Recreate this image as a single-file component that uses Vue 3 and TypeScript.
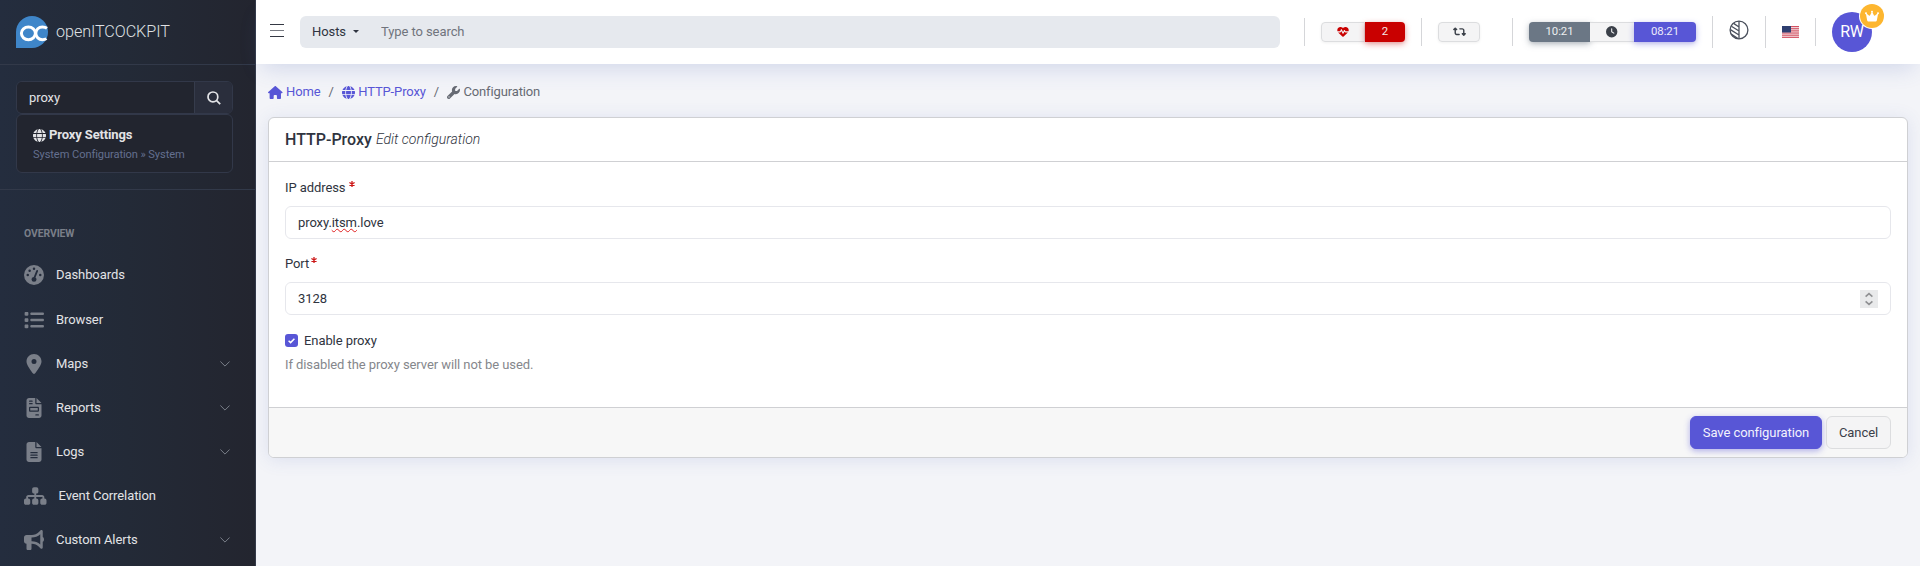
<script setup lang="ts">
import { ref } from 'vue'

interface Glyph {
  w: number
  d: string
}

interface NavItem {
  label: string
  icon: string
  size: number
  expandable: boolean
}

const glyphs: Record<string, Glyph> = {
  globe: { w: 512, d: 'M352 256c0 22.2-1.2 43.6-3.3 64H163.3c-2.2-20.4-3.3-41.8-3.3-64s1.2-43.6 3.3-64H348.7c2.2 20.4 3.3 41.8 3.3 64zm28.8-64H503.9c5.3 20.5 8.1 41.9 8.1 64s-2.8 43.5-8.1 64H380.8c2.1-20.6 3.2-42 3.2-64s-1.1-43.4-3.2-64zm112.6-32H376.7c-10-63.9-29.8-117.4-55.3-151.6c78.3 20.7 142 77.5 171.9 151.6zm-149.1 0H167.7c6.1-36.4 15.5-68.6 27-94.7c10.5-23.6 22.2-40.7 33.5-51.5C239.4 3.2 248.7 0 256 0s16.6 3.2 27.8 13.8c11.3 10.8 23 27.9 33.5 51.5c11.6 26 20.9 58.2 27 94.7zm-209 0H18.6C48.6 85.9 112.2 29.1 190.6 8.4C165.1 42.6 145.3 96.1 135.3 160zM8.1 192H131.2c-2.1 20.6-3.2 42-3.2 64s1.1 43.4 3.2 64H8.1C2.8 299.5 0 278.1 0 256s2.8-43.5 8.1-64zM194.7 446.6c-11.6-26-20.9-58.2-27-94.6H344.3c-6.1 36.4-15.5 68.6-27 94.6c-10.5 23.6-22.2 40.7-33.5 51.5C272.6 508.8 263.3 512 256 512s-16.6-3.2-27.8-13.8c-11.3-10.8-23-27.9-33.5-51.5zM135.3 352c10 63.9 29.8 117.4 55.3 151.6C112.2 482.9 48.6 426.1 18.6 352H135.3zm358.1 0c-30 74.1-93.6 130.9-171.9 151.6c25.5-34.2 45.2-87.7 55.3-151.6H493.4z' },
  house: { w: 576, d: 'M575.8 255.5c0 18-15 32.1-32 32.1h-32l.7 160.2c0 2.7-.2 5.4-.5 8.1V472c0 22.1-17.9 40-40 40H456c-1.1 0-2.2 0-3.3-.1c-1.4 .1-2.8 .1-4.2 .1H416 392c-22.1 0-40-17.9-40-40V448 384c0-17.7-14.3-32-32-32H256c-17.7 0-32 14.3-32 32v64 24c0 22.1-17.9 40-40 40H160 128.1c-1.5 0-3-.1-4.5-.2c-1.2 .1-2.4 .2-3.6 .2H104c-22.1 0-40-17.9-40-40V360c0-.9 0-1.9 .1-2.8V287.6H32c-18 0-32-14-32-32.1c0-9 3-17 10-24L266.4 8c7-7 15-8 22-8s15 2 21 7L564.8 231.5c8 7 12 15 11 24z' },
  wrench: { w: 512, d: 'M352 320c88.4 0 160-71.6 160-160c0-15.3-2.2-30.1-6.2-44.2c-3.1-10.8-16.4-13.2-24.3-5.3l-76.8 76.8c-3 3-7.1 4.7-11.3 4.7H336c-8.8 0-16-7.2-16-16V118.6c0-4.2 1.7-8.3 4.7-11.3l76.8-76.8c7.9-7.9 5.4-21.2-5.3-24.3C382.1 2.2 367.3 0 352 0C263.6 0 192 71.6 192 160c0 19.1 3.4 37.5 9.5 54.5L19.9 396.1C7.2 408.8 0 426.1 0 444.1C0 481.6 30.4 512 67.9 512c18 0 35.3-7.2 48-19.9L297.5 310.5c17 6.2 35.4 9.5 54.5 9.5zM80 408a24 24 0 1 1 0 48 24 24 0 1 1 0-48z' },
  gauge: { w: 512, d: 'M256 0a256 256 0 1 0 0 512A256 256 0 1 0 256 0zM256 64a32 32 0 1 1 0 64a32 32 0 1 1 0-64zM144 112a32 32 0 1 1 0 64a32 32 0 1 1 0-64zM96 224a32 32 0 1 1 0 64a32 32 0 1 1 0-64zM416 224a32 32 0 1 1 0 64a32 32 0 1 1 0-64zM346 130c12 5 18 19 13 31L294 319c16 12 26 29 26 49a64 64 0 1 1-70-64L315 143c5-12 19-18 31-13z' },
  list: { w: 512, d: 'M40 48C26.7 48 16 58.7 16 72v48c0 13.3 10.7 24 24 24H88c13.3 0 24-10.7 24-24V72c0-13.3-10.7-24-24-24H40zM192 64c-17.7 0-32 14.3-32 32s14.3 32 32 32H480c17.7 0 32-14.3 32-32s-14.3-32-32-32H192zm0 160c-17.7 0-32 14.3-32 32s14.3 32 32 32H480c17.7 0 32-14.3 32-32s-14.3-32-32-32H192zm0 160c-17.7 0-32 14.3-32 32s14.3 32 32 32H480c17.7 0 32-14.3 32-32s-14.3-32-32-32H192zM16 232v48c0 13.3 10.7 24 24 24H88c13.3 0 24-10.7 24-24V232c0-13.3-10.7-24-24-24H40c-13.3 0-24 10.7-24 24zM40 368c-13.3 0-24 10.7-24 24v48c0 13.3 10.7 24 24 24H88c13.3 0 24-10.7 24-24V392c0-13.3-10.7-24-24-24H40z' },
  pin: { w: 384, d: 'M215.7 499.2C267 435 384 279.4 384 192C384 86 298 0 192 0S0 86 0 192c0 87.4 117 243 168.3 307.2c12.3 15.3 35.1 15.3 47.4 0zM192 128a64 64 0 1 1 0 128 64 64 0 1 1 0-128z' },
  invoice: { w: 384, d: 'M64 0C28.7 0 0 28.7 0 64V448c0 35.3 28.7 64 64 64H320c35.3 0 64-28.7 64-64V160H256c-17.7 0-32-14.3-32-32V0H64zM256 0V128H384L256 0zM80 64h64c8.8 0 16 7.2 16 16s-7.2 16-16 16H80c-8.8 0-16-7.2-16-16s7.2-16 16-16zm0 64h64c8.8 0 16 7.2 16 16s-7.2 16-16 16H80c-8.8 0-16-7.2-16-16s7.2-16 16-16zm16 96H288c17.7 0 32 14.3 32 32v64c0 17.7-14.3 32-32 32H96c-17.7 0-32-14.3-32-32V256c0-17.7 14.3-32 32-32zm0 32v64H288V256H96zM240 416h64c8.8 0 16 7.2 16 16s-7.2 16-16 16H240c-8.8 0-16-7.2-16-16s7.2-16 16-16z' },
  file: { w: 384, d: 'M64 0C28.7 0 0 28.7 0 64V448c0 35.3 28.7 64 64 64H320c35.3 0 64-28.7 64-64V160H256c-17.7 0-32-14.3-32-32V0H64zM256 0V128H384L256 0zM112 256H272c8.8 0 16 7.2 16 16s-7.2 16-16 16H112c-8.8 0-16-7.2-16-16s7.2-16 16-16zm0 64H272c8.8 0 16 7.2 16 16s-7.2 16-16 16H112c-8.8 0-16-7.2-16-16s7.2-16 16-16zm0 64H272c8.8 0 16 7.2 16 16s-7.2 16-16 16H112c-8.8 0-16-7.2-16-16s7.2-16 16-16z' },
  sitemap: { w: 576, d: 'M208 80c0-26.5 21.5-48 48-48h64c26.5 0 48 21.5 48 48v64c0 26.5-21.5 48-48 48h-8v40H464c30.9 0 56 25.1 56 56v32h8c26.5 0 48 21.5 48 48v64c0 26.5-21.5 48-48 48H464c-26.5 0-48-21.5-48-48V368c0-26.5 21.5-48 48-48h8V288c0-4.4-3.6-8-8-8H312v40h8c26.5 0 48 21.5 48 48v64c0 26.5-21.5 48-48 48H256c-26.5 0-48-21.5-48-48V368c0-26.5 21.5-48 48-48h8V280H112c-4.4 0-8 3.6-8 8v32h8c26.5 0 48 21.5 48 48v64c0 26.5-21.5 48-48 48H48c-26.5 0-48-21.5-48-48V368c0-26.5 21.5-48 48-48h8V288c0-30.9 25.1-56 56-56H264V192h-8c-26.5 0-48-21.5-48-48V80z' },
  bullhorn: { w: 512, d: 'M480 32c0-12.9-7.8-24.6-19.8-29.6s-25.7-2.2-34.9 6.9L381.7 53c-48 48-113.1 75-181 75H192 160 64c-35.3 0-64 28.7-64 64v96c0 35.3 28.7 64 64 64l0 128c0 17.7 14.3 32 32 32h64c17.7 0 32-14.3 32-32V352l8.7 0c67.9 0 133 27 181 75l43.6 43.6c9.2 9.2 22.9 11.9 34.9 6.9s19.8-16.6 19.8-29.6V300.4c18.6-8.8 32-32.5 32-60.4s-13.4-51.6-32-60.4V32zm-64 76.7V240 371.3C357.2 317.8 280.5 288 200.7 288H192V192h8.7c79.8 0 156.5-29.8 215.3-83.3z' },
  crown: { w: 576, d: 'M309 106c11.4-7 19-19.7 19-34c0-22.1-17.9-40-40-40s-40 17.9-40 40c0 14.4 7.6 27 19 34L209.7 220.6c-9.1 18.2-32.7 23.4-48.6 10.7L72 160c5-6.7 8-15 8-24c0-22.1-17.9-40-40-40S0 113.9 0 136s17.9 40 40 40c.2 0 .5 0 .7 0L86.4 427.4c5.5 30.4 32 52.6 63 52.6H426.6c30.9 0 57.4-22.1 63-52.6L535.3 176c.2 0 .5 0 .7 0c22.1 0 40-17.9 40-40s-17.9-40-40-40s-40 17.9-40 40c0 9 3 17.3 8 24l-89.1 71.3c-15.9 12.7-39.5 7.5-48.6-10.7L309 106z' },
  clock: { w: 512, d: 'M256 0a256 256 0 1 1 0 512A256 256 0 1 1 256 0zM232 120V256c0 8 4 15.5 10.7 20l96 64c11 7.4 25.9 4.4 33.3-6.7s4.4-25.9-6.7-33.3L280 243.2V120c0-13.3-10.7-24-24-24s-24 10.7-24 24z' },
  retweet: { w: 576, d: 'M272 416c17.7 0 32-14.3 32-32s-14.3-32-32-32H160c-17.7 0-32-14.3-32-32V192h32c12.9 0 24.6-7.8 29.6-19.8s2.2-25.7-6.9-34.9l-64-64c-12.5-12.5-32.8-12.5-45.3 0l-64 64c-9.2 9.2-11.9 22.9-6.9 34.9s16.6 19.8 29.6 19.8l32 0 0 128c0 53 43 96 96 96H272zM304 96c-17.7 0-32 14.3-32 32s14.3 32 32 32l112 0c17.7 0 32 14.3 32 32l0 128H416c-12.9 0-24.6 7.8-29.6 19.8s-2.2 25.7 6.9 34.9l64 64c12.5 12.5 32.8 12.5 45.3 0l64-64c9.2-9.2 11.9-22.9 6.9-34.9s-16.6-19.8-29.6-19.8l-32 0V192c0-53-43-96-96-96L304 96z' },
  heart: { w: 512, d: 'M228.3 469.1L47.6 300.4c-4.2-3.9-8.2-8.1-11.9-12.4h87c22.6 0 43-13.6 51.7-34.5l10.5-25.2 49.3 109.5c3.8 8.5 12.1 14 21.4 14.1s17.8-5 22-13.3L320 253.7l1.7 3.4c9.5 19 28.9 31 50.1 31H476.3c-3.7 4.3-7.7 8.5-11.9 12.4L283.7 469.1c-7.5 7-17.4 10.9-27.7 10.9s-20.2-3.9-27.7-10.9zM503.7 240h-132c-3 0-5.8-1.7-7.2-4.4l-23.2-46.3c-4.1-8.1-12.4-13.3-21.5-13.3s-17.4 5.1-21.5 13.3l-41.4 82.8L205.9 158.2c-3.9-8.7-12.7-14.3-22.2-14.1s-18.1 5.9-21.8 14.8l-31.8 76.3c-1.2 3-4.2 4.9-7.4 4.9H16c-2.6 0-5 .4-7.3 1.1C3 225.2 0 208.2 0 190.9v-5.8c0-69.9 50.5-129.5 119.4-141C165 36.5 211.4 51.4 244 84l12 12 12-12c32.6-32.6 79-47.5 124.6-39.9C461.5 55.6 512 115.2 512 185.1v5.8c0 16.9-2.8 33.5-8.3 49.1z' },
}

const box = (name: string): string => `0 0 ${glyphs[name].w} 512`

const nav: NavItem[] = [
  { label: 'Dashboards', icon: 'gauge', size: 20, expandable: false },
  { label: 'Browser', icon: 'list', size: 20, expandable: false },
  { label: 'Maps', icon: 'pin', size: 20, expandable: true },
  { label: 'Reports', icon: 'invoice', size: 20, expandable: true },
  { label: 'Logs', icon: 'file', size: 20, expandable: true },
  { label: 'Event Correlation', icon: 'sitemap', size: 22.5, expandable: false },
  { label: 'Custom Alerts', icon: 'bullhorn', size: 20, expandable: true },
]

const menuQuery = ref('proxy')
const objectQuery = ref('')
const port = ref('3128')
const enabled = ref(true)
</script>

<template>
  <div class="layout">
    <aside class="sidebar">
      <div class="brand">
        <svg class="logo" viewBox="0 0 32 32">
          <path d="M0 32V16A16 16 0 1 1 16 32Z" fill="#3f86c9" />
          <g fill="none" stroke="#fff">
            <ellipse cx="12.4" cy="17.3" rx="7" ry="6.4" stroke-width="3" />
            <path d="M31 12.2C29.6 11.2 28 10.9 26.4 10.9A6.6 6.4 0 1 0 26.4 23.7C28 23.7 29.3 23.4 30.4 22.6" stroke-width="3" />
            <path d="M18.2 14.8h3.4M20 14.8v5.4" stroke-width="1" />
          </g>
        </svg>
        <span class="brand-name">openITCOCKPIT</span>
      </div>

      <div class="menu-search">
        <div class="search-group">
          <input v-model="menuQuery" class="search-input" type="text" spellcheck="false" />
          <button class="search-button" type="button">
            <svg class="lens" viewBox="0 0 14 14" width="14" height="14">
              <circle cx="5.9" cy="5.9" r="4.9" />
              <path d="M9.4 9.4L13.2 13.2" />
            </svg>
          </button>
        </div>
        <div class="search-result">
          <div class="result-title">
            <svg class="fa13" :viewBox="box('globe')"><path :d="glyphs.globe.d" /></svg>
            <span>Proxy Settings</span>
          </div>
          <div class="result-path">System Configuration » System</div>
        </div>
      </div>

      <div class="nav-title">Overview</div>
      <nav class="nav">
        <a v-for="item in nav" :key="item.label" class="nav-item">
          <svg class="nav-icon" :width="item.size" height="20" :viewBox="box(item.icon)">
            <path :d="glyphs[item.icon].d" fill-rule="evenodd" />
          </svg>
          <span class="nav-label">{{ item.label }}</span>
          <svg v-if="item.expandable" class="chevron" viewBox="0 0 10 6" width="10" height="6">
            <path d="M0.4 0.5L5 5.1L9.6 0.5" />
          </svg>
        </a>
      </nav>
    </aside>

    <div class="page">
      <header class="header">
        <div class="toggler"><i></i><i class="mid"></i><i></i></div>
        <div class="object-search">
          <span class="object-type">Hosts<i class="caret"></i></span>
          <input v-model="objectQuery" class="object-input" type="text" placeholder="Type to search" />
        </div>

        <i class="rule r1"></i>
        <div class="btn-group health">
          <span class="seg light heart">
            <svg width="12" height="11.4" :viewBox="box('heart')"><path :d="glyphs.heart.d" /></svg>
          </span>
          <span class="seg danger">2</span>
        </div>
        <i class="rule"></i>
        <div class="btn-group swap">
          <span class="seg light">
            <svg width="13" height="11.4" :viewBox="box('retweet')"><path :d="glyphs.retweet.d" /></svg>
          </span>
        </div>
        <i class="rule"></i>
        <div class="btn-group times">
          <span class="seg secondary">10:21</span>
          <span class="seg light">
            <svg width="11.4" height="11.4" :viewBox="box('clock')"><path :d="glyphs.clock.d" fill-rule="evenodd" /></svg>
          </span>
          <span class="seg primary">08:21</span>
        </div>
        <i class="rule tall"></i>
        <svg class="contrast" viewBox="0 0 20 20" width="20" height="20">
          <circle cx="10" cy="10" r="8.9" />
          <path d="M10 1v18M4.6 3.4L10 7M2.4 6.2L10 11M1.4 9.6L10 15M2.2 14L8.6 18.4" />
        </svg>
        <i class="rule tall"></i>
        <svg class="flag" viewBox="0 0 17 12" width="17" height="12">
          <rect width="17" height="12" fill="#f6e9eb" />
          <path d="M0 .5h17M0 2.35h17M0 4.2h17M0 6.05h17M0 7.9h17M0 9.75h17M0 11.6h17" stroke="#d0485a" stroke-width=".95" />
          <rect width="9" height="6.5" fill="#2e3f70" />
        </svg>
        <i class="rule"></i>
        <div class="avatar">
          <span>RW</span>
          <div class="badge">
            <svg width="14" height="12.4" :viewBox="box('crown')"><path :d="glyphs.crown.d" /></svg>
          </div>
        </div>
      </header>

      <main class="content">
        <ol class="breadcrumb">
          <li class="link">
            <svg class="house" :viewBox="box('house')"><path :d="glyphs.house.d" /></svg>Home
          </li>
          <li class="slash">/</li>
          <li class="link">
            <svg class="fa13" :viewBox="box('globe')"><path :d="glyphs.globe.d" /></svg>HTTP-Proxy
          </li>
          <li class="slash">/</li>
          <li>
            <svg class="fa13" :viewBox="box('wrench')"><path :d="glyphs.wrench.d" /></svg>Configuration
          </li>
        </ol>

        <section class="card">
          <div class="card-header">
            <h5>HTTP-Proxy</h5>
            <em>Edit configuration</em>
          </div>
          <div class="card-body">
            <div class="label">IP address
              <svg class="star" viewBox="0 0 6 6"><path d="M3 0v6M.4 1.5l5.2 3M5.6 1.5l-5.2 3" /></svg>
            </div>
            <div class="field"><span>proxy.<span class="typo">itsm</span>.love</span></div>
            <div class="label second">Port
              <svg class="star tight" viewBox="0 0 6 6"><path d="M3 0v6M.4 1.5l5.2 3M5.6 1.5l-5.2 3" /></svg>
            </div>
            <div class="field">
              <input v-model="port" class="port" type="text" />
              <span class="spinner">
                <svg viewBox="0 0 18 18" width="18" height="18"><path d="M5.6 6.7L9 3.6L12.4 6.7M5.6 11.3L9 14.4L12.4 11.3" /></svg>
              </span>
            </div>
            <label class="check">
              <input v-model="enabled" class="native" type="checkbox" />
              <span class="tick">
                <svg v-if="enabled" viewBox="0 0 13 13" width="13" height="13"><path d="M3.6 6.7L5.6 8.6L9.4 4.8" /></svg>
              </span>
              Enable proxy
            </label>
            <div class="hint">If disabled the proxy server will not be used.</div>
          </div>
          <div class="card-footer">
            <button class="btn save" type="button">Save configuration</button>
            <button class="btn cancel" type="button">Cancel</button>
          </div>
        </section>
      </main>
    </div>
  </div>
</template>

<style>
body {
  background: #f3f4f8;
  overflow: hidden;
}
</style>

<style scoped>
* {
  box-sizing: border-box;
}

.layout {
  display: flex;
  height: 566px;
  overflow: hidden;
  font: 400 13px/19.5px Roboto, "Liberation Sans", sans-serif;
  letter-spacing: -0.08px;
  color: #2f3440;
}

svg {
  display: block;
  flex: none;
  fill: currentColor;
}

input,
button {
  font: inherit;
  letter-spacing: inherit;
  color: inherit;
  margin: 0;
  outline: none;
}

.fa13 {
  width: 13px;
  height: 13px;
}

/* Sidebar */
.sidebar {
  flex: none;
  width: 256px;
  border-right: 1px solid #343a49;
  background: linear-gradient(90deg, #242d3e 0, #232a37 50%, #23252f 100%);
  color: #e2e3e6;
}

.brand {
  display: flex;
  align-items: center;
  gap: 8px;
  height: 65px;
  padding: 0 16px 1px;
  border-bottom: 1px solid #323949;
}

.logo {
  width: 32px;
  height: 32px;
}

.brand-name {
  font-size: 16.2px;
  font-weight: 300;
  color: #dfe0e3;
}

.menu-search {
  height: 125px;
  padding: 16px 22px 0 16px;
  border-bottom: 1px solid #323949;
}

.search-group {
  display: flex;
  height: 33px;
  border: 1px solid #323849;
  border-radius: 6px;
  overflow: hidden;
}

.search-input {
  flex: 1;
  min-width: 0;
  padding: 0 12px;
  border: 0;
  background: #22252f;
}

.search-button {
  display: flex;
  align-items: center;
  justify-content: center;
  width: 38px;
  padding: 0;
  border: 0;
  border-left: 1px solid #363c4c;
  background: #2a2e3c;
}

.lens {
  fill: none;
  stroke: #e3e4e7;
  stroke-width: 1.7;
}

.search-result {
  height: 59px;
  padding: 10px 16px 0;
  border: 1px solid #323849;
  border-radius: 6px;
  background: #22252f;
}

.result-title {
  display: flex;
  align-items: center;
  gap: 3px;
  height: 20px;
  font-weight: 700;
  letter-spacing: -0.13px;
}

.result-path {
  font-size: 11.1px;
  line-height: 19px;
  color: #64708f;
}

.nav-title {
  padding: 34px 24px 0;
  font-size: 10.4px;
  line-height: 19px;
  font-weight: 700;
  text-transform: uppercase;
  color: #7a7f89;
}

.nav {
  display: flex;
  flex-direction: column;
  padding-top: 10px;
}

.nav-item {
  display: flex;
  align-items: center;
  height: 44px;
  padding: 0 25px 0 24px;
}

.nav-item:first-child {
  height: 45px;
  padding-bottom: 1px;
}

.nav-icon {
  margin-right: 12px;
  color: #7a7f89;
}

.nav-label {
  flex: 1;
  padding-bottom: 1px;
}

.chevron path {
  fill: none;
  stroke: #7a7f89;
  stroke-width: 1;
}

/* Header */
.page {
  flex: 1;
  min-width: 0;
}

.header {
  display: flex;
  align-items: center;
  height: 64px;
  padding-left: 14px;
  background: #fff;
  box-shadow: 0 10px 22px -6px rgba(70, 95, 180, 0.2);
}

.toggler {
  display: flex;
  flex-direction: column;
  gap: 5px;
  width: 14px;
  margin: 0 16px 3px 0;
}

.toggler i {
  height: 1px;
  background: #343843;
}

.toggler .mid {
  background: #777a82;
}

.object-search {
  display: flex;
  align-items: center;
  width: 980px;
  height: 32px;
  border-radius: 6px;
  background: #e6e9ee;
}

.object-type {
  display: flex;
  align-items: center;
  gap: 7px;
  width: 69px;
  padding-left: 12px;
}

.caret {
  margin-bottom: 1px;
  border: 3px solid transparent;
  border-top-color: #2f3440;
  border-bottom: 0;
}

.object-input {
  flex: 1;
  padding: 0 12px;
  border: 0;
  background: transparent;
}

.object-input::placeholder {
  color: #70747d;
  opacity: 1;
}

.rule {
  width: 1px;
  height: 28px;
  background: #d5d6d9;
}

.rule.tall {
  height: 32px;
}

.r1 {
  margin-left: 24px;
}

.btn-group {
  display: flex;
  height: 20px;
  border-radius: 4px;
  font-size: 11.375px;
  box-shadow: 0 1px 3px rgba(0, 0, 0, 0.06);
}

.health {
  margin: 0 16px;
}

.swap {
  margin: 0 32px 0 16px;
}

.times {
  margin: 0 16px;
}

.seg {
  display: flex;
  align-items: center;
  justify-content: center;
}

.seg:first-child {
  border-radius: 4px 0 0 4px;
}

.seg:last-child {
  border-radius: 0 4px 4px 0;
}

.seg:only-child {
  border-radius: 4px;
}

.light {
  border: 1px solid #dcdddf;
  background: #f4f4f5;
  color: #3b4049;
}

.health .seg {
  width: 44px;
}

.health .danger {
  width: 40px;
  background: #c90000;
  color: #f3e6e6;
  box-shadow: 0 2px 6px rgba(201, 0, 0, 0.4);
}

.heart {
  color: #c90000;
}

.swap .seg {
  width: 42px;
}

.times .secondary {
  width: 61px;
  background: #6b7785;
  color: #eceef0;
  box-shadow: 0 2px 6px rgba(107, 119, 133, 0.5);
}

.times .light {
  width: 44px;
  border-left: 0;
  border-right: 0;
}

.times .primary {
  width: 62px;
  background: #5856d6;
  color: #ecebfa;
  box-shadow: 0 2px 6px rgba(88, 86, 214, 0.4);
}

.contrast {
  margin: 0 16px 4px;
  fill: none;
  stroke: #4a505c;
  stroke-width: 1.3;
}

.flag {
  margin: 0 16px;
}

.avatar {
  position: relative;
  display: flex;
  align-items: center;
  justify-content: center;
  width: 40px;
  height: 40px;
  margin-left: 16px;
  border-radius: 50%;
  background: #5856d6;
  color: #fff;
  font-size: 16px;
  letter-spacing: -0.4px;
}

.badge {
  position: absolute;
  top: -8px;
  right: -12px;
  display: flex;
  align-items: center;
  justify-content: center;
  width: 24px;
  height: 24px;
  border-radius: 50%;
  background: #fdb62f;
  box-shadow: 0 0 0 1px #fff;
}

/* Content */
.content {
  padding: 0 12px;
}

.breadcrumb {
  display: flex;
  align-items: center;
  height: 53px;
  margin: 0;
  padding: 3px 0 0;
  list-style: none;
  letter-spacing: -0.14px;
  color: #666a73;
}

.breadcrumb li {
  display: flex;
  align-items: center;
  gap: 3.5px;
}

.breadcrumb .link {
  color: #5856d6;
}

.breadcrumb .slash {
  padding: 0 8px;
}

.house {
  width: 14.6px;
  height: 13px;
}

.card {
  border: 1px solid #cfd0d3;
  border-radius: 6px;
  background: #fff;
  overflow: hidden;
  box-shadow: 0 2px 18px rgba(70, 95, 180, 0.13);
}

.card-header {
  display: flex;
  align-items: center;
  gap: 4px;
  height: 44px;
  padding: 0 16px;
  border-bottom: 1px solid #cfd0d3;
  letter-spacing: 0;
}

.card-header h5 {
  margin: 0;
  font-size: 16px;
  font-weight: 500;
}

.card-header em {
  padding-top: 1px;
  font-size: 14px;
  font-weight: 300;
}

.card-body {
  height: 245px;
  padding: 16px 16px 0;
}

.label {
  display: flex;
  align-items: center;
  height: 20px;
  margin-bottom: 8px;
}

.label.second {
  margin-top: 15px;
}

.star {
  width: 6px;
  height: 6px;
  margin: 0 0 8px 3.5px;
}

.star.tight {
  margin-left: 2px;
}

.star path {
  fill: none;
  stroke: #cc1717;
  stroke-width: 1.3;
}

.field {
  display: flex;
  align-items: center;
  justify-content: space-between;
  height: 33px;
  padding: 0 12px;
  border: 1px solid #e6e7ec;
  border-radius: 6px;
}

.typo {
  text-decoration: underline wavy #e02020 1px;
  text-underline-offset: 1px;
  text-decoration-skip-ink: none;
}

.port {
  flex: 1;
  padding: 0;
  border: 0;
  background: transparent;
}

.spinner {
  background: #e9eaeb;
}

.spinner path {
  fill: none;
  stroke: #8f9092;
  stroke-width: 1.6;
}

.check {
  display: flex;
  align-items: center;
  gap: 6px;
  height: 19px;
  margin-top: 16px;
}

.native {
  display: none;
}

.tick {
  width: 13px;
  height: 13px;
  border-radius: 3px;
  background: #5856d6;
}

.tick path {
  fill: none;
  stroke: #fff;
  stroke-width: 1.5;
}

.hint {
  margin-top: 5px;
  color: #85878c;
}

.card-footer {
  display: flex;
  align-items: center;
  justify-content: flex-end;
  gap: 4px;
  height: 50px;
  padding: 0 16px;
  border-top: 1px solid #cfd0d3;
  background: #f7f7f7;
}

.btn {
  height: 33px;
  padding: 0;
  border: 1px solid #dcdddf;
  border-radius: 6px;
}

.save {
  width: 132px;
  border-color: #5856d6;
  background: #5856d6;
  color: #f3f2fd;
  box-shadow: 0 2px 6px rgba(88, 86, 214, 0.45);
}

.cancel {
  width: 65px;
  background: #f4f4f5;
  color: #3b4049;
}
</style>
